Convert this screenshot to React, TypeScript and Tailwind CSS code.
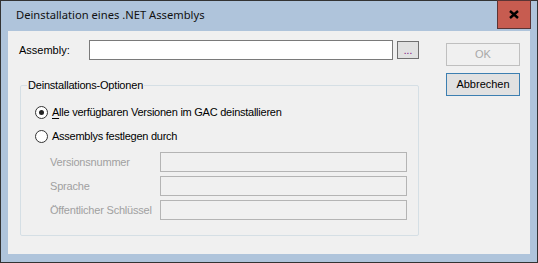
import React from "react";

const ui = { fontFamily: '"Liberation Sans", Arial, sans-serif' };

function Radio({ checked, label, accel }: { checked?: boolean; label: string; accel?: boolean }) {
  return (
    <div className="flex items-center h-[16px]">
      <span className="flex items-center justify-center w-[13px] h-[13px] rounded-full border border-[#333333] bg-[#ffffff] ml-[14px]">
        {checked && <span className="w-[5px] h-[5px] rounded-full bg-[#222222]" />}
      </span>
      <span className="ml-[4px] text-[11px] text-black tracking-[-0.25px]">
        {accel ? (
          <>
            <span className="underline underline-offset-[2px]">{label[0]}</span>
            {label.slice(1)}
          </>
        ) : (
          label
        )}
      </span>
    </div>
  );
}

function DisabledField({ label }: { label: string }) {
  return (
    <div className="flex items-center h-[20px]">
      <span className="w-[139px] text-[11px] text-[#a0a0a0] pl-[29px] whitespace-nowrap tracking-[-0.2px]">{label}</span>
      <div className="w-[247px] h-[20px] border border-[#b4b4b4] bg-[#f0f0f0]" />
    </div>
  );
}

export default function App() {
  return (
    <div className="relative w-[538px] h-[263px] border border-[#333333] bg-[#afc4db] flex flex-col" style={ui}>
      {/* Title bar */}
      <div className="h-[30px] flex items-center pl-[15px] pb-[1px]">
        <span className="text-[11.2px] text-[#111111]" style={{ fontFamily: '"Noto Sans", sans-serif' }}>
          Deinstallation eines .NET Assemblys
        </span>
      </div>
      <div className="absolute -top-px right-[6px] w-[34px] h-[29px] bg-[#c75c50] border border-[#5a3434] flex items-center justify-center">
        <svg width="10" height="9" viewBox="0 0 10 9">
          <path d="M1 1 L9 8 M9 1 L1 8" stroke="#000" strokeWidth="2.4" />
        </svg>
      </div>

      {/* Client area */}
      <div className="mx-[7px] h-[223px] bg-[#f0f0f0] flex">
        <div className="flex flex-col w-[420px]">
          <div className="flex items-center mt-[9px] h-[20px]">
            <span className="w-[81px] pl-[11px] text-[11px] text-black">Assembly:</span>
            <div className="w-[304px] h-[20px] border border-[#7a7a7a] bg-white" />
            <div className="ml-[4px] w-[22px] h-[18px] border border-[#707070] bg-[#e1e1e1] flex items-end justify-center pb-[3px]">
              <span className="text-[10px] leading-[8px] text-[#7a007a]">...</span>
            </div>
          </div>

          <fieldset className="ml-[12px] mt-[19px] w-[399px] h-[157px] border border-[#d5dfe5] rounded-[2px]">
            <legend className="ml-[6px] px-[1px] text-[11px] text-black leading-[13px] tracking-[-0.2px]">Deinstallations-Optionen</legend>
            <div className="mt-[12px] flex flex-col gap-[8px]">
              <Radio checked accel label="Alle verfügbaren Versionen im GAC deinstallieren" />
              <Radio label="Assemblys festlegen durch" />
            </div>
            <div className="mt-[8px] flex flex-col gap-[4px]">
              <DisabledField label="Versionsnummer" />
              <DisabledField label="Sprache" />
              <DisabledField label="Öffentlicher Schlüssel" />
            </div>
          </fieldset>
        </div>

        <div className="ml-[18px] flex flex-col pt-[12px] gap-[7px]">
          <div className="w-[74px] h-[23px] border border-[#bfbfbf] bg-[#f0f0f0] flex items-center justify-center text-[11px] text-[#a8a8a8]">
            OK
          </div>
          <div className="w-[74px] h-[23px] border border-[#3c7fb1] bg-[#e1e1e1] flex items-center justify-center text-[11px] text-black">
            Abbrechen
          </div>
        </div>
      </div>
    </div>
  );
}
